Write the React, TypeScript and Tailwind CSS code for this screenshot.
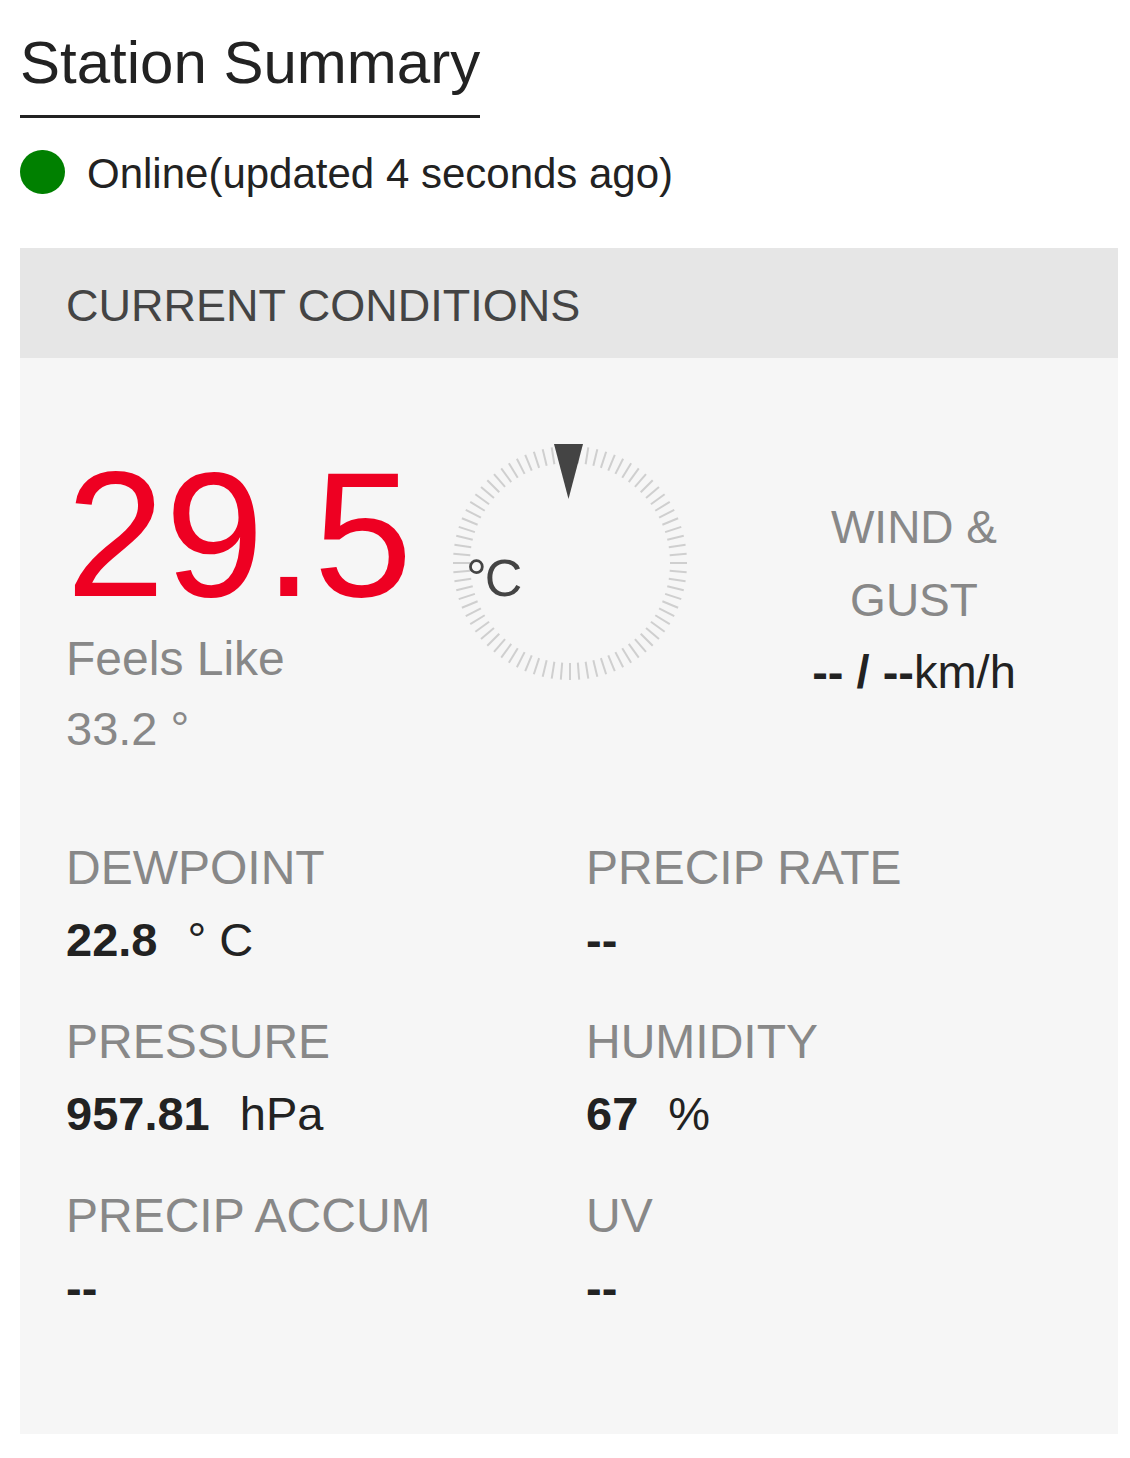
import React from 'react';

const ticks = Array.from({ length: 80 }, (_, i) => i);

const Gauge = () => {
    return (
        <div className="relative w-[238px] h-[238px] shrink-0">
            <svg width="238" height="238" viewBox="0 0 238 238" className="absolute inset-0">
                {ticks.map((i) => {
                    const a = (i / 80) * Math.PI * 2;
                    const x1 = 119 + Math.sin(a) * 100;
                    const y1 = 119 - Math.cos(a) * 100;
                    const x2 = 119 + Math.sin(a) * 117;
                    const y2 = 119 - Math.cos(a) * 117;
                    return <line key={i} x1={x1} y1={y1} x2={x2} y2={y2} stroke="#cfcfcf" strokeWidth="2" />;
                })}
                <polygon points="103,0 132,0 117.5,55" fill="#444444" />
            </svg>
            <span className="absolute left-[15px] top-[108px] text-[52px] leading-none tracking-[-2px] text-[#444]">°C</span>
        </div>
    );
};

const Stat = ({ label, value, unit }: { label: string; value: string; unit?: string }) => (
    <div>
        <div className="text-[48px] leading-[60px] text-[#888]">{label}</div>
        <div className="mt-[12px] text-[47px] leading-[60px] text-[#222]">
            <span className="font-bold">{value}</span>
            {unit && <span className="ml-[30px]">{unit}</span>}
        </div>
    </div>
);

const App = () => {
    return (
        <div className="min-h-screen bg-white pl-[20px] pr-[12px] pt-[29px] pb-[22px]" style={{ fontFamily: '"Liberation Sans", Arial, sans-serif' }}>
            <h1 className="inline-block text-[60px] leading-[67px] text-[#222] pb-[19px] border-b-[3px] border-[#222]">
                Station Summary
            </h1>

            <div className="mt-[32px] flex items-center h-[44px]">
                <span className="w-[45px] h-[44px] rounded-full bg-[#008000]" />
                <span className="ml-[22px] pt-[3px] text-[42px] leading-[48px] text-[#222]">Online(updated 4 seconds ago)</span>
            </div>

            <div className="mt-[54px] h-[110px] bg-[#e6e6e6] flex items-center px-[46px] pt-[6px]">
                <span className="text-[45px] text-[#444]">CURRENT CONDITIONS</span>
            </div>

            <div className="bg-[#f6f6f6] pl-[46px] pr-[46px] pt-[86px] pb-[116px]">
                <div className="flex">
                    <div className="w-[385px] shrink-0">
                        <div className="mt-[2px] text-[178px] leading-none text-[#ee0022]">29.5</div>
                        <div className="text-[48px] leading-[70px] text-[#888]">Feels Like</div>
                        <div className="text-[47px] leading-[70px] text-[#888]">33.2 °</div>
                    </div>
                    <Gauge />
                    <div className="ml-[75px] w-[300px] mt-[47px] text-center">
                        <div className="text-[46px] leading-[73px] text-[#888]">WIND &amp;</div>
                        <div className="text-[46px] leading-[73px] text-[#888]">GUST</div>
                        <div className="text-[47px] leading-[70px] text-[#222]">
                            <span className="font-bold">-- / --</span>km/h
                        </div>
                    </div>
                </div>

                <div className="mt-[74px] grid grid-cols-2 gap-x-[34px] gap-y-[42px]">
                    <Stat label="DEWPOINT" value="22.8" unit="° C" />
                    <Stat label="PRECIP RATE" value="--" />
                    <Stat label="PRESSURE" value="957.81" unit="hPa" />
                    <Stat label="HUMIDITY" value="67" unit="%" />
                    <Stat label="PRECIP ACCUM" value="--" />
                    <Stat label="UV" value="--" />
                </div>
            </div>
        </div>
    );
};

export default App;
